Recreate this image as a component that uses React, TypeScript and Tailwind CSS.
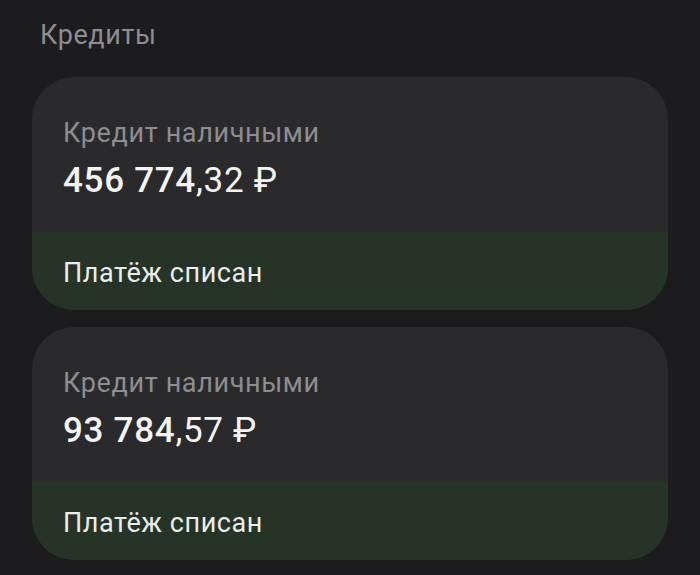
import React from 'react';

type Loan = { title: string; whole: string; fraction: string; status: string };

const loans: Loan[] = [
  { title: 'Кредит наличными', whole: '456 774', fraction: ',32 ₽', status: 'Платёж списан' },
  { title: 'Кредит наличными', whole: '93 784', fraction: ',57 ₽', status: 'Платёж списан' },
];

const LoanCard = ({ loan }: { loan: Loan }) => (
  <div className="rounded-[42px] overflow-hidden bg-[#2a2a2d]">
    <div className="pt-[40px] pb-[31px] px-[31px]">
      <div className="text-[27px] leading-[32px] text-[#8d8d92] tracking-[0.65px]">{loan.title}</div>
      <div className="mt-[12px] text-[35px] leading-[40px] text-[#f4f4f4] tracking-[0.7px]">
        <span className="font-medium">{loan.whole}</span>
        <span>{loan.fraction}</span>
      </div>
    </div>
    <div className="bg-[#263427] pt-[25px] pb-[21px] px-[31px]">
      <div className="text-[27px] leading-[32px] text-[#ececec] tracking-[0.55px]">{loan.status}</div>
    </div>
  </div>
);

export default function App() {
  return (
    <div className="min-h-screen bg-[#1c1c1e] font-['Roboto',sans-serif] pt-[19px] px-[32px]">
      <h2 className="pl-[8px] text-[27px] leading-[32px] text-[#8d8d92] tracking-[0.6px]">Кредиты</h2>
      <div className="mt-[26px] flex flex-col gap-[17px]">
        {loans.map((loan, i) => (
          <LoanCard key={i} loan={loan} />
        ))}
      </div>
    </div>
  );
}
